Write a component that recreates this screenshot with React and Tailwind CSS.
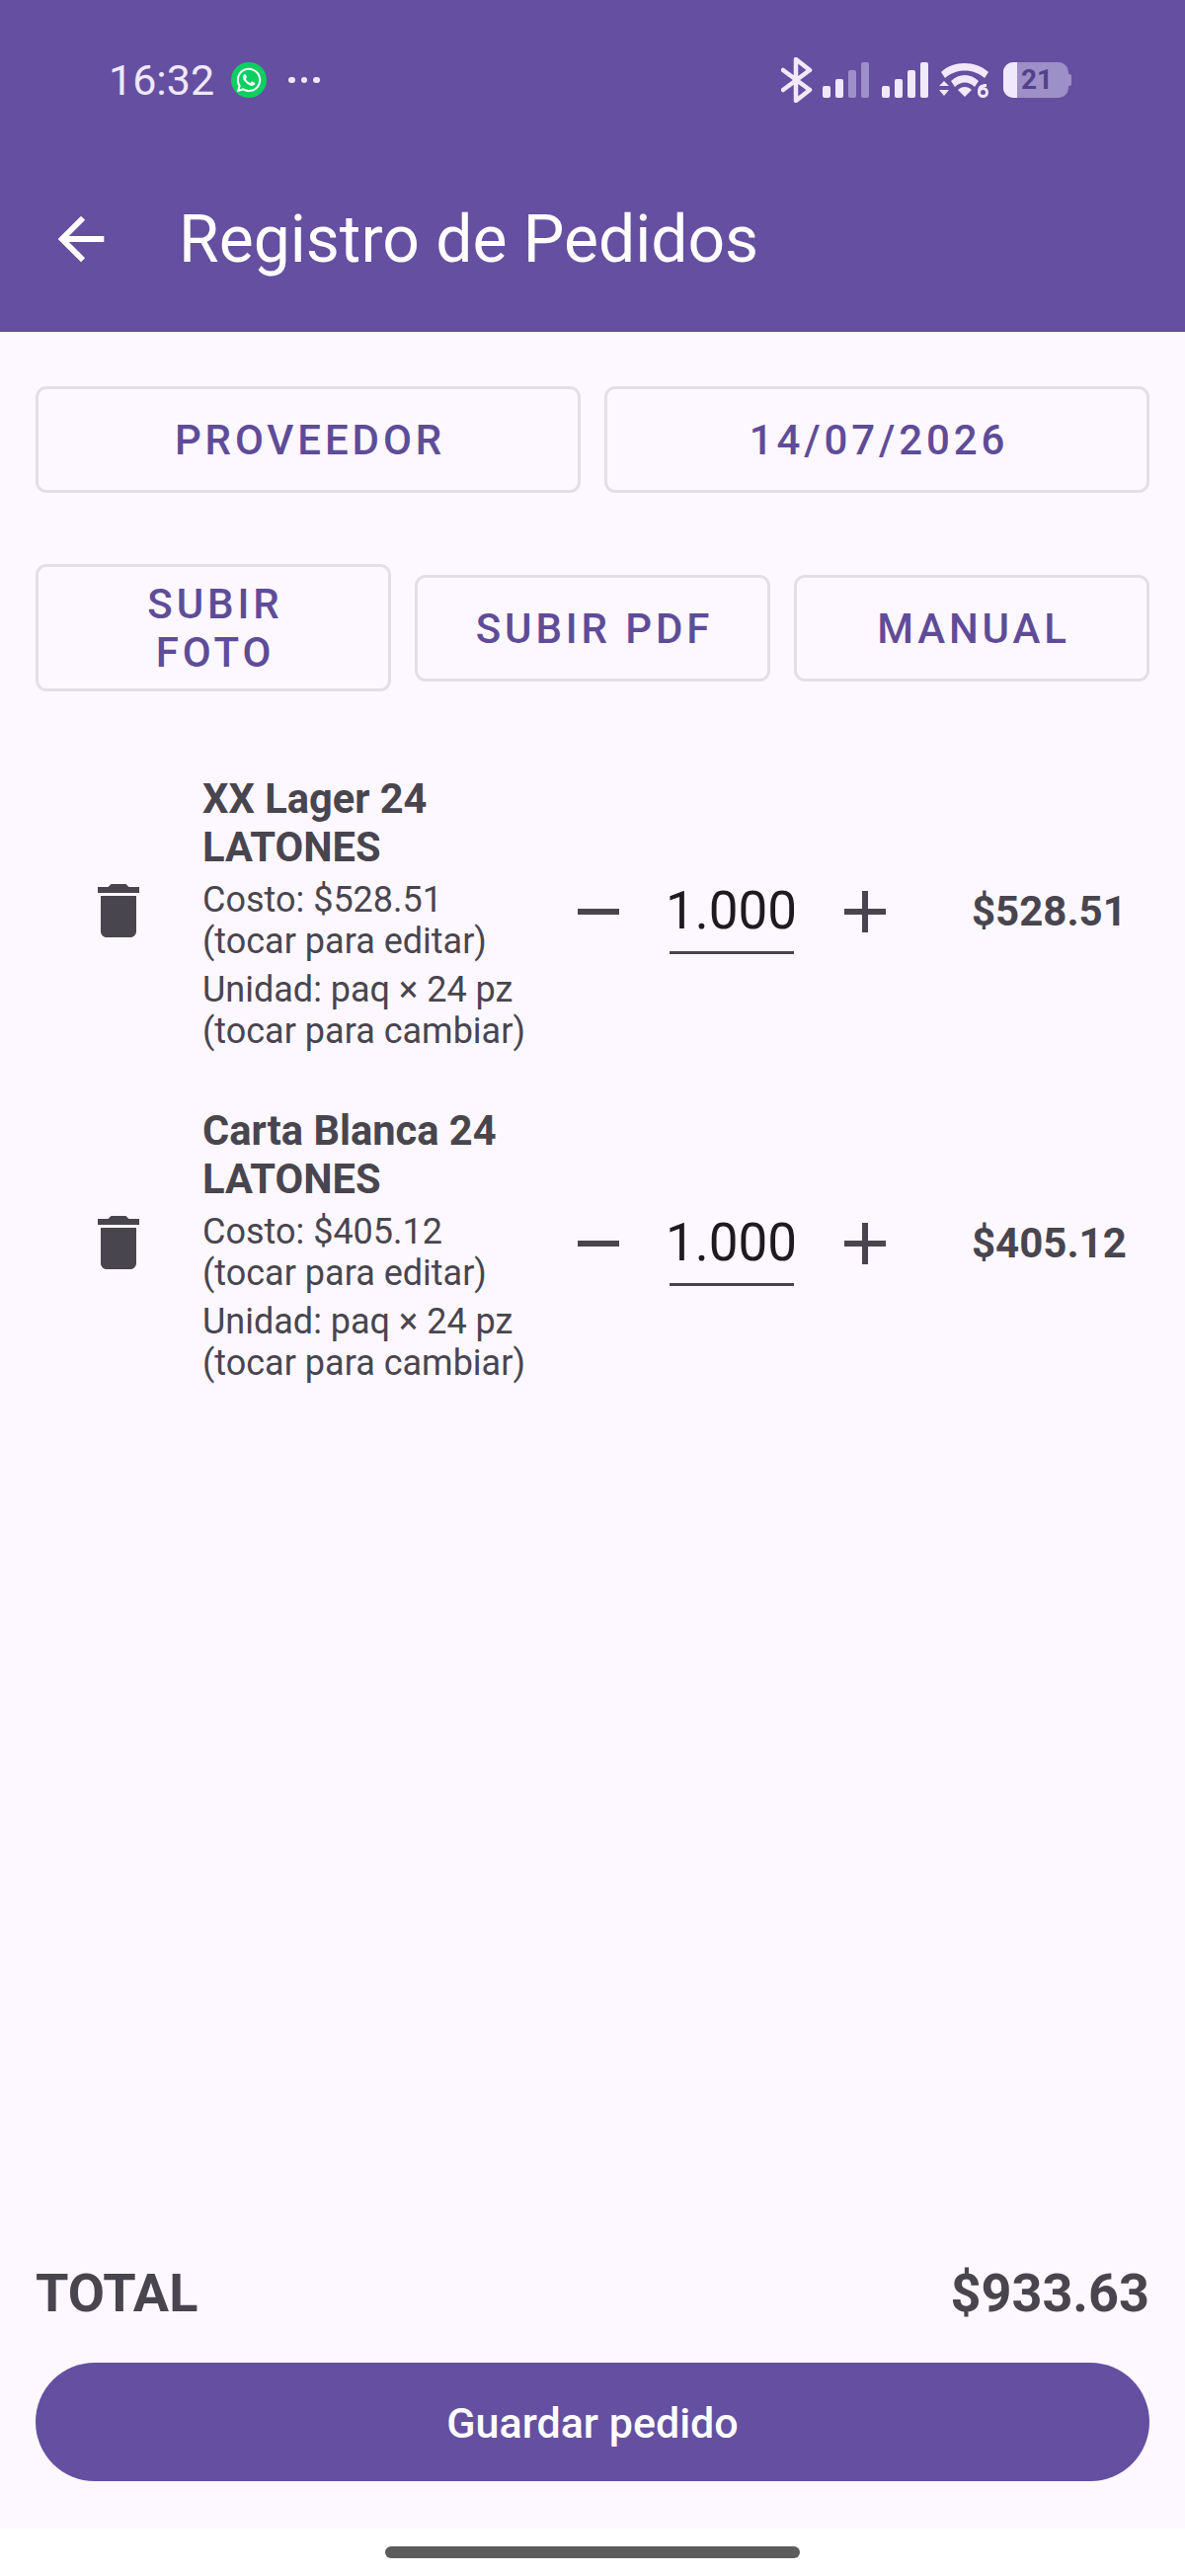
import React from "react";
import { FaWhatsapp } from "react-icons/fa";

const Bars = ({ dim }) => {
  const hs = [12, 19, 28, 36];
  return (
    <div className="flex items-end gap-[5px] h-[36px]">
      {hs.map((h, i) => (
        <div
          key={i}
          className={`w-[8px] rounded-[2px] ${i >= dim ? "bg-[#9d8fc7]" : "bg-[#f0e9fc]"}`}
          style={{ height: h }}
        />
      ))}
    </div>
  );
};

const StatusBar = () => (
  <div className="h-[162px] flex items-center justify-between pl-[110px] pr-[115px]">
    <div className="flex items-center">
      <span className="text-[43px] leading-none text-[#efe8fb] w-[124px]">16:32</span>
      <div className="w-[36px] h-[36px] rounded-full bg-[#0ccf62] flex items-center justify-center">
        <FaWhatsapp className="text-white w-[28px] h-[28px]" />
      </div>
      <div className="flex gap-[6px] ml-[22px]">
        <div className="w-[6.5px] h-[6.5px] rounded-full bg-[#efe8fb]" />
        <div className="w-[6.5px] h-[6.5px] rounded-full bg-[#efe8fb]" />
        <div className="w-[6.5px] h-[6.5px] rounded-full bg-[#efe8fb]" />
      </div>
    </div>
    <div className="flex items-center">
      <svg width="32" height="46" viewBox="0 0 32 46" fill="none" stroke="#f0e9fc" strokeWidth="4.5" strokeLinejoin="round" strokeLinecap="round">
        <path d="M2 13 L29 33 L15 44 L15 2 L29 13 L2 33" />
      </svg>
      <div className="ml-[10px]"><Bars dim={2} /></div>
      <div className="ml-[13px]"><Bars dim={4} /></div>
      <svg className="ml-[11px]" width="52" height="38" viewBox="0 0 52 38" fill="#f0e9fc">
        <path d="M2 11 C14 -1 37 -1 50 11 L46 17 C35 7 17 7 6 17 Z" />
        <path d="M12 20 C20 12 32 12 40 20 L36 26 C30 20 22 20 16 26 Z" />
        <path d="M19 29 C23 25 29 25 33 29 L26 36 Z" />
        <path d="M0 25 L5 20 L10 25 Z M0 29 L10 29 L5 35 Z" />
        <path d="M39 31.5 a5.5 5.5 0 1 0 11 0 a5.5 5.5 0 1 0 -11 0 Z M42 31.5 a2.5 2.5 0 1 1 5 0 a2.5 2.5 0 1 1 -5 0 Z" fillRule="evenodd" />
        <path d="M39 31 C39 25 42 23 48 23 L48 26 C44 26 42 28 42 31 Z" />
      </svg>
      <div className="ml-[13px] flex items-center">
        <div className="relative w-[66px] h-[36px] rounded-[10px] bg-[#9d8fc7] overflow-hidden flex items-center justify-center">
          <div className="absolute left-0 top-0 bottom-0 w-[14px] bg-[#f0e9fc]" />
          <span className="relative pl-[2px] text-[28px] leading-none font-bold text-[#524188]">21</span>
        </div>
        <div className="w-[3px] h-[12px] bg-[#9d8fc7] rounded-r-[2px]" />
      </div>
    </div>
  </div>
);

const OutlineBtn = ({ children, className = "" }) => (
  <button className={`flex-1 rounded-[11px] border-[3px] border-[#e2dfe5] text-[#5f4c98] text-[42px] leading-[49px] font-medium tracking-[3.9px] text-center pl-[4px] pt-[1px] ${className}`}>
    {children}
  </button>
);

const Trash = () => (
  <svg width="72" height="72" viewBox="0 0 24 24" fill="#49454f">
    <path d="M6 19c0 1.1.9 2 2 2h8c1.1 0 2-.9 2-2V7H6v12zM19 4h-3.5l-1-1h-5l-1 1H5v2h14V4z" />
  </svg>
);

const Item = ({ name1, name2, cost, total }) => (
  <div className="h-[336px] flex items-center pl-[84px]">
    <div className="w-[121px] shrink-0 -mt-[2px]"><Trash /></div>
    <div className="w-[379px] shrink-0 text-[#49454f] pt-[3px]">
      <div className="text-[41.6px] leading-[49px] font-bold">{name1}<br />{name2}</div>
      <div className="text-[36px] leading-[42px] mt-[8px]">Costo: {cost}<br />(tocar para editar)</div>
      <div className="text-[36px] leading-[42px] mt-[7px]">Unidad: paq × 24 pz<br />(tocar para cambiar)</div>
    </div>
    <svg width="44" height="44" viewBox="0 0 44 44" fill="#49454f" className="shrink-0">
      <rect x="1" y="19" width="42" height="6" />
    </svg>
    <div className="ml-[50px] w-[126px] shrink-0 border-b-[3px] border-[#49454f] text-[#1d1b20] text-[53px] leading-[81px] pt-[1px] text-left indent-[-4px]">1.000</div>
    <svg width="44" height="44" viewBox="0 0 44 44" fill="#49454f" className="ml-[50px] shrink-0">
      <rect x="1" y="19" width="42" height="6" />
      <rect x="19" y="1" width="6" height="42" />
    </svg>
    <div className="ml-[86px] text-[42px] leading-none font-bold text-[#49454f]">{total}</div>
  </div>
);

export default function App() {
  return (
    <div className="h-[2608px] w-[1200px] flex flex-col bg-[#fdf8ff] overflow-hidden" style={{ fontFamily: "Roboto, sans-serif" }}>
      <header className="h-[336px] shrink-0 bg-[#654fa1]">
        <StatusBar />
        <div className="h-[160px] flex items-center pl-[47px]">
          <svg width="70" height="70" viewBox="0 0 24 24" fill="#ffffff">
            <path d="M20 11H7.83l5.59-5.59L12 4l-8 8 8 8 1.41-1.41L7.83 13H20v-2z" />
          </svg>
          <h1 className="ml-[64px] text-[66px] leading-none text-white pt-[2px]">Registro de Pedidos</h1>
        </div>
      </header>

      <main className="flex-1 flex flex-col px-[36px] pt-[55px] pb-[48px]">
        <div className="flex gap-[24px] h-[108px]">
          <OutlineBtn>PROVEEDOR</OutlineBtn>
          <OutlineBtn>14/07/2026</OutlineBtn>
        </div>
        <div className="flex gap-[24px] items-center mt-[72px] h-[129px]">
          <OutlineBtn className="h-[129px]">SUBIR<br />FOTO</OutlineBtn>
          <OutlineBtn className="h-[108px]">SUBIR PDF</OutlineBtn>
          <OutlineBtn className="h-[108px]">MANUAL</OutlineBtn>
        </div>
        <div className="mt-[55px] -mx-[36px]">
          <Item name1="XX Lager 24" name2="LATONES" cost="$528.51" total="$528.51" />
          <Item name1="Carta Blanca 24" name2="LATONES" cost="$405.12" total="$405.12" />
        </div>
        <div className="mt-auto flex items-center justify-between text-[#49454f] text-[54px] leading-[62px] font-bold mb-[39px]">
          <span>TOTAL</span>
          <span>$933.63</span>
        </div>
        <button className="h-[120px] w-full rounded-full bg-[#654fa1] text-white text-[43px] font-medium pt-[3px]">Guardar pedido</button>
      </main>

      <div className="h-[48px] shrink-0 bg-white flex justify-center pt-[18px]">
        <div className="w-[420px] h-[12px] rounded-full bg-[#5c5c5c]" />
      </div>
    </div>
  );
}
